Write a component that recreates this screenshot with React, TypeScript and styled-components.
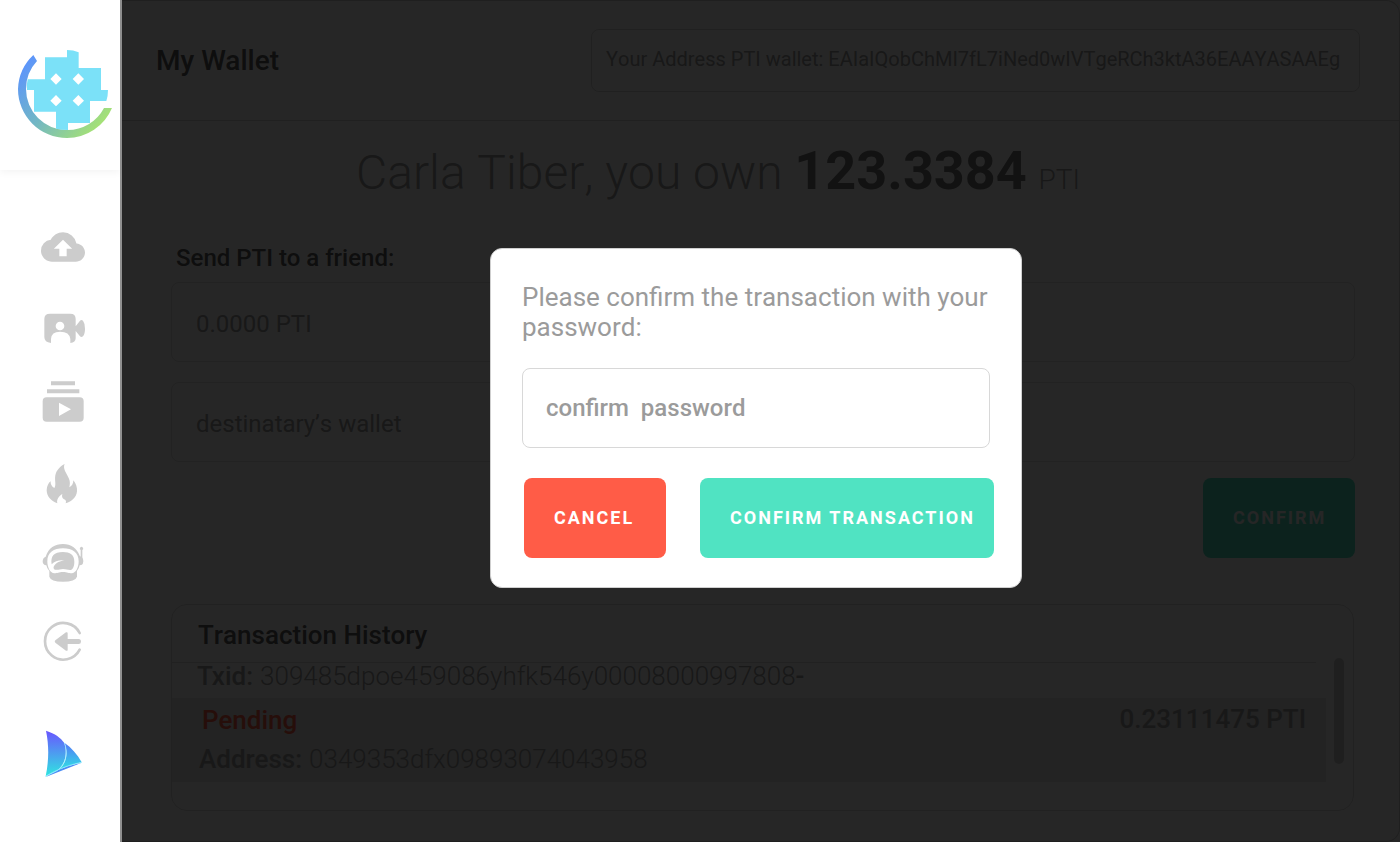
import React from "react";
import styled, { createGlobalStyle } from "styled-components";
import { MdCloudUpload } from "react-icons/md";

const GlobalStyle = createGlobalStyle`
  * { box-sizing: border-box; }
  body {
    margin: 0;
    background: #ffffff;
    font-family: Roboto, "Liberation Sans", sans-serif;
    -webkit-font-smoothing: antialiased;
  }
  h1, h2, p, dl, dt, dd, ul { margin: 0; padding: 0; }
`;

const Page = styled.div`
  display: flex;
  min-height: 100vh;
`;

const Sidebar = styled.aside`
  display: flex;
  flex-direction: column;
  flex: 0 0 122px;
  border-right: 2px solid #909090;
  background: #ffffff;
`;

const Brand = styled.a`
  display: block;
  height: 170px;
  padding-top: 30px;
  box-shadow: 0 2px 8px rgba(0, 0, 0, 0.05);
`;

const Nav = styled.nav`
  display: flex;
  flex-direction: column;
  gap: 31px;
  padding: 53px 0 0 39px;
`;

const NavLink = styled.a`
  display: flex;
  align-items: center;
  justify-content: center;
  width: 48px;
  height: 48px;
  color: #cccccc;
`;

const SailLink = styled(NavLink)`
  margin-top: 33px;
`;

const Main = styled.main`
  position: relative;
  flex: 1;
  min-width: 0;
  border: 1px solid #d0d0d0;
  border-left: 0;
  border-radius: 0 14px 14px 0;
`;

const Header = styled.header`
  display: flex;
  align-items: center;
  justify-content: space-between;
  height: 120px;
  padding: 0 39px 0 34px;
  border-bottom: 1px solid #d8d8d8;
`;

const Title = styled.h1`
  font-size: 28px;
  line-height: 34px;
  font-weight: 500;
  color: #606060;
`;

const WalletAddress = styled.p`
  min-width: 769px;
  padding: 13px 14px 16px;
  border: 1px solid #d8d8d8;
  border-radius: 8px;
  font-size: 20px;
  line-height: 32px;
  font-kerning: none;
  color: #a0a0a0;
`;

const Balance = styled.p`
  padding: 18px 85px 0 0;
  text-align: center;
  font-size: 48px;
  line-height: 64px;
  font-weight: 300;
  font-kerning: none;
  color: #a0a0a0;

  strong {
    font-size: 54px;
    font-weight: 700;
    color: #7a7a7a;
  }

  small {
    font-size: 28px;
  }
`;

const TransferForm = styled.form`
  display: flex;
  flex-direction: column;
  padding: 30px 44px 0 49px;
`;

const FormTitle = styled.h2`
  padding-left: 5px;
  font-size: 24px;
  line-height: 32px;
  font-weight: 500;
  color: #606060;
`;

const Field = styled.input<{ $modal?: boolean }>`
  width: 100%;
  height: 80px;
  padding: ${(p) => (p.$modal ? "0 23px 1px" : "3px 24px 0")};
  border: 1px solid ${(p) => (p.$modal ? "#d8d8d8" : "#e0e0e0")};
  border-radius: 8px;
  background: transparent;
  font-family: inherit;
  font-size: 24px;
  font-weight: ${(p) => (p.$modal ? 500 : 400)};
  font-kerning: none;

  &::placeholder {
    color: ${(p) => (p.$modal ? "#9b9b9b" : "#a0a0a0")};
    opacity: 1;
  }
`;

const FieldStack = styled.div`
  display: flex;
  flex-direction: column;
  gap: 20px;
  padding: 8px 0 16px;
`;

const Button = styled.button<{ $tone: string; $width: number }>`
  width: ${(p) => p.$width}px;
  height: 80px;
  padding: 0 0 0 30px;
  border: 0;
  border-radius: 8px;
  background: ${(p) => p.$tone};
  font-family: inherit;
  font-size: 18px;
  line-height: 24px;
  font-weight: 700;
  letter-spacing: 2px;
  text-align: left;
  white-space: nowrap;
  color: #ffffff;
`;

const SubmitButton = styled(Button)`
  align-self: flex-end;
`;

const History = styled.section`
  display: flex;
  margin: 46px 45px 29px 49px;
  border: 1px solid #dcdcdc;
  border-radius: 16px;
`;

const HistoryBody = styled.div`
  flex: 1;
  min-width: 0;
  padding-bottom: 28px;
`;

const HistoryTitle = styled.h2`
  margin-right: 10px;
  padding: 14px 0 11px 26px;
  border-bottom: 1px solid #dcdcdc;
  font-size: 26px;
  line-height: 32px;
  font-weight: 500;
  font-kerning: none;
  color: #606060;
`;

const Entry = styled.dl`
  display: flex;
  gap: 7px;
  font-size: 26px;
  line-height: 26px;
  color: #a0a0a0;

  dt,
  b {
    font-weight: 500;
  }

  dd {
    font-weight: 300;
  }
`;

const TxidEntry = styled(Entry)`
  padding: 0 25px 9px;
`;

const PendingRow = styled.div`
  display: flex;
  justify-content: space-between;
  padding: 6px 20px 10px 27px;
  background: #e8e8e8;
`;

const Status = styled.p`
  padding-left: 3px;
  margin-bottom: 10px;
  font-size: 26px;
  line-height: 32px;
  font-weight: 500;
  color: #ff5c47;
`;

const Amount = styled.p`
  font-size: 26px;
  line-height: 30px;
  font-weight: 500;
  color: #a0a0a0;
`;

const ScrollThumb = styled.div`
  width: 10px;
  height: 106px;
  margin: 53px 9px 0 8px;
  border-radius: 5px;
  background: #d0d0d0;
`;

const Backdrop = styled.div`
  position: absolute;
  inset: -1px -1px -1px 0;
  display: flex;
  align-items: center;
  justify-content: center;
  padding: 0 10px 6px 0;
  background: rgba(0, 0, 0, 0.85);
`;

const Dialog = styled.form`
  display: flex;
  flex-direction: column;
  width: 532px;
  padding: 33px 26px 29px 31px;
  border: 1px solid #cfcfcf;
  border-radius: 12px;
  background: #ffffff;
`;

const DialogLabel = styled.label`
  font-size: 26px;
  line-height: 30px;
  font-kerning: none;
  color: #9b9b9b;
`;

const DialogField = styled.div`
  padding: 26px 5px 30px 0;
`;

const DialogActions = styled.div`
  display: flex;
  justify-content: space-between;
  padding: 0 1px 0 2px;
`;

const Logo = () => (
  <svg width="120" height="120" viewBox="0 0 360 360" aria-hidden="true">
    <defs>
      <linearGradient id="ring" gradientUnits="userSpaceOnUse" x1="70" y1="90" x2="300" y2="290">
        <stop offset="0" stopColor="#5b92ff" />
        <stop offset="0.5" stopColor="#72b7c4" />
        <stop offset="1" stopColor="#a6e274" />
      </linearGradient>
    </defs>
    <path
      fill="url(#ring)"
      d="M336 234A147 147 0 0 1 201 324A147 147 0 0 1 54 177A147 147 0 0 1 100 75L111 93A123 123 0 0 0 78 177A123 123 0 0 0 201 300A123 123 0 0 0 312 234Z"
    />
    <path
      fill="#7be1f8"
      fillRule="evenodd"
      d="M201 60Q220 60 236 67V114H303V180H324Q324 198 319 213H270V279H204V300Q185 300 168 296V245H102V180H81Q79 164 83 148H135V82H201ZM168 130L151 147L168 164L185 147ZM235 130L218 147L235 164L252 147ZM168 195L151 212L168 229L185 212ZM235 195L218 212L235 229L252 212Z"
    />
  </svg>
);

const Glyph = ({ box, children }: { box: string; children: React.ReactNode }) => (
  <svg width="48" height="48" viewBox={box} fill="currentColor" aria-hidden="true">
    {children}
  </svg>
);

const CameraIcon = () => (
  <Glyph box="57 261 144 144">
    <path
      fillRule="evenodd"
      d="M90 296H151Q167 296 167 312V334L180 317Q184 313 189 317Q195 325 195 341Q195 357 189 364Q184 368 180 364L167 348V370Q167 382 151 384V372Q149 350 120 350Q94 350 93 372V384Q73 382 73 366V312Q73 296 90 296ZM120 320A13 13 0 1 0 120 346A13 13 0 1 0 120 320Z"
    />
  </Glyph>
);

const LibraryIcon = () => (
  <Glyph box="57 498 144 144">
    <path
      fillRule="evenodd"
      d="M93 499H165V511H93ZM81 523H178V535H81ZM80 547H179Q191 547 191 559V608Q191 620 179 620H80Q68 620 68 608V559Q68 547 80 547ZM117 563V603L153 583Z"
    />
  </Glyph>
);

const FlameIcon = () => (
  <Glyph box="57 30 144 144">
    <path d="M134 42C129 53 135 63 141 74C149 88 152 96 148 112C156 108 160 100 160 91C168 100 172 112 171 124C169 142 156 154 137 160C140 153 137 150 132 148C126 144 125 139 127 132C117 138 109 148 112 160C92 152 80 138 80 121C80 108 86 98 92 94C91 102 95 110 103 114C110 104 103 92 106 76C109 60 122 48 134 42Z" />
  </Glyph>
);

const AstronautIcon = () => (
  <Glyph box="57 267 144 144">
    <path
      fillRule="evenodd"
      d="M129 282C153 282 171 295 179 317L182 320V300A5 5 0 1 1 187 300V322Q190 328 190 334Q190 342 184 345L179 346Q177 356 171 363V380Q166 395 129 395Q92 395 88 380V363Q81 356 79 346Q68 345 68 334Q68 324 77 320C85 294 105 282 129 282ZM129 295C101 295 82 308 82 334C82 352 90 369 103 370C112 370 116 366 129 366C142 366 146 370 155 370C168 369 176 352 176 334C176 308 157 295 129 295Z"
    />
    <path d="M129 306C150 306 163 314 163 335C163 350 158 360 150 360C142 360 139 357 129 357C119 357 115 361 105 359C101 357 100 354 101 350C109 337 121 333 134 331C118 329 104 333 95 343C91 318 102 306 129 306Z" />
  </Glyph>
);

const ExitIcon = () => (
  <Glyph box="57 504 144 144">
    <path
      fill="none"
      stroke="currentColor"
      strokeWidth="8"
      strokeLinecap="round"
      d="M179 549A55 55 0 1 0 179 599"
    />
    <path d="M106 571L138 547Q143 545 143 550V567H176Q183 567 183 575Q183 582 176 582H143V599Q143 604 138 602L106 578Q102 574 106 571Z" />
  </Glyph>
);

const SailIcon = () => (
  <Glyph box="59 45 144 144">
    <defs>
      <linearGradient id="sail" x1="0" y1="0" x2="0" y2="1">
        <stop offset="0" stopColor="#6a55ff" />
        <stop offset="1" stopColor="#2fe6e0" />
      </linearGradient>
      <linearGradient id="jib" x1="0" y1="0" x2="0" y2="1">
        <stop offset="0" stopColor="#5578f8" />
        <stop offset="1" stopColor="#2fe0e4" />
      </linearGradient>
    </defs>
    <path fill="url(#sail)" d="M80 47C108 56 124 68 135 84C144 110 140 146 115 166L79 184C88 140 90 96 80 47Z" />
    <path fill="url(#jib)" d="M136 84C156 98 174 118 187 142C162 148 140 154 119 164C143 143 146 112 136 84Z" />
    <path fill="#4a8df5" d="M187 143L79 186C112 163 150 150 187 143Z" />
    <path fill="none" stroke="#8defff" strokeWidth="2" d="M135 84C147 112 140 146 115 166L79 184C112 163 150 149 187 142" />
  </Glyph>
);

export default function App() {
  return (
    <>
      <GlobalStyle />
      <Page>
        <Sidebar>
          <Brand href="#" aria-label="Home">
            <Logo />
          </Brand>
          <Nav aria-label="Main">
            <NavLink href="#upload" aria-label="Upload">
              <MdCloudUpload size={44} />
            </NavLink>
            <NavLink href="#live" aria-label="Live">
              <CameraIcon />
            </NavLink>
            <NavLink href="#library" aria-label="Library">
              <LibraryIcon />
            </NavLink>
            <NavLink href="#trending" aria-label="Trending">
              <FlameIcon />
            </NavLink>
            <NavLink href="#profile" aria-label="Profile">
              <AstronautIcon />
            </NavLink>
            <NavLink href="#logout" aria-label="Log out">
              <ExitIcon />
            </NavLink>
            <SailLink href="#about" aria-label="About">
              <SailIcon />
            </SailLink>
          </Nav>
        </Sidebar>
        <Main>
          <Header>
            <Title>My Wallet</Title>
            <WalletAddress>
              Your Address PTI wallet: EAIaIQobChMI7fL7iNed0wIVTgeRCh3ktA36EAAYASAAEg
            </WalletAddress>
          </Header>
          <Balance>
            Carla Tiber, you own <strong>123.3384</strong> <small>PTI</small>
          </Balance>
          <TransferForm>
            <FormTitle>Send PTI to a friend:</FormTitle>
            <FieldStack>
              <Field aria-label="Amount" placeholder="0.0000 PTI" />
              <Field aria-label="Destination wallet" placeholder="destinatary’s wallet" />
            </FieldStack>
            <SubmitButton type="button" $tone="#50e3c2" $width={152}>
              CONFIRM
            </SubmitButton>
          </TransferForm>
          <History>
            <HistoryBody>
              <HistoryTitle>Transaction History</HistoryTitle>
              <TxidEntry>
                <dt>Txid:</dt>
                <dd>
                  309485dpoe459086yhfk546y00008000997808<b>-</b>
                </dd>
              </TxidEntry>
              <PendingRow>
                <div>
                  <Status>Pending</Status>
                  <Entry>
                    <dt>Address:</dt>
                    <dd>0349353dfx09893074043958</dd>
                  </Entry>
                </div>
                <Amount>0.23111475 PTI</Amount>
              </PendingRow>
            </HistoryBody>
            <ScrollThumb />
          </History>
          <Backdrop>
            <Dialog role="dialog" aria-modal="true" aria-labelledby="confirm-label">
              <DialogLabel id="confirm-label" htmlFor="confirm-password">
                Please confirm the transaction with your password:
              </DialogLabel>
              <DialogField>
                <Field
                  $modal
                  id="confirm-password"
                  type="password"
                  placeholder="confirm&nbsp; password"
                />
              </DialogField>
              <DialogActions>
                <Button type="button" $tone="#ff5c47" $width={142}>
                  CANCEL
                </Button>
                <Button type="button" $tone="#50e3c2" $width={294}>
                  CONFIRM TRANSACTION
                </Button>
              </DialogActions>
            </Dialog>
          </Backdrop>
        </Main>
      </Page>
    </>
  );
}
